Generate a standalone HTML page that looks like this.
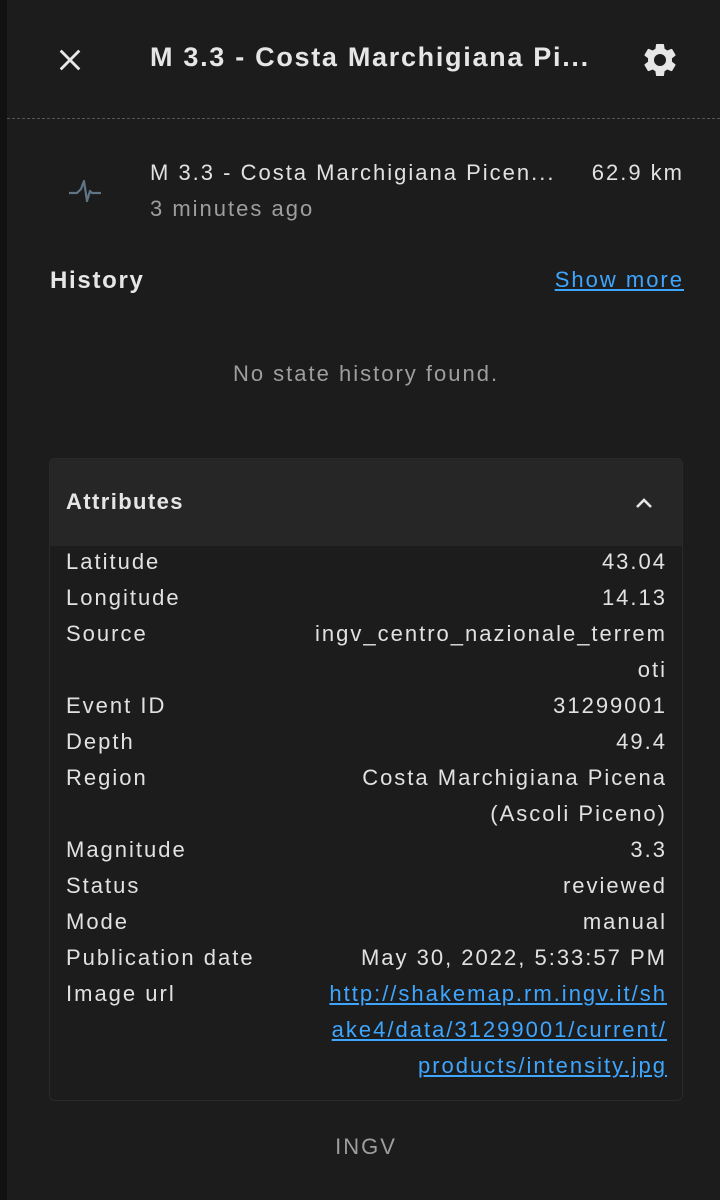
<!DOCTYPE html>
<html><head><meta charset="utf-8"><style>
*{margin:0;padding:0;box-sizing:border-box}
html,body{width:720px;height:1200px;overflow:hidden;background:#111;font-family:"Liberation Sans",sans-serif;color:#e1e1e1;letter-spacing:2px}
.panel{position:absolute;left:7px;top:0;width:713px;height:1200px;background:#1c1c1c}
.abs{position:absolute;white-space:nowrap}
.hdr-line{position:absolute;left:7px;right:0;top:118px;border-top:1px dashed #555}
.card{position:absolute;left:49px;top:458px;width:634px;height:643px;border:1px solid #2a2a2a;border-radius:6px;background:#1c1c1c;overflow:hidden}
.card .head{height:87px;background:#262626;position:relative}
.row{position:absolute;left:66px;width:601px;font-size:22px;letter-spacing:2px}
.row .k{position:absolute;left:0}
.row .v{position:absolute;right:0;text-align:right;line-height:36px}
a{color:#3ea6ff;text-decoration:underline}
</style></head><body>
<div class="panel"></div>
<svg class="abs" style="left:56px;top:46px" width="28" height="28" viewBox="0 0 24 24"><path d="M4 4L20 20M20 4L4 20" stroke="#e8e8e8" stroke-width="2.4"/></svg>
<div class="abs" style="left:150px;top:42px;font-size:27px;font-weight:bold;color:#e6e6e6;letter-spacing:1.7px">M 3.3 - Costa Marchigiana Pi...</div>
<svg class="abs" style="left:640px;top:40px" width="40" height="40" viewBox="0 0 24 24"><path fill="#e6e6e6" d="M19.14 12.94c.04-.3.06-.61.06-.94s-.02-.64-.07-.94l2.03-1.58a.49.49 0 0 0 .12-.61l-1.92-3.32a.49.49 0 0 0-.59-.22l-2.39.96c-.5-.38-1.03-.7-1.62-.94l-.36-2.54a.48.48 0 0 0-.48-.41h-3.84c-.24 0-.43.17-.47.41l-.36 2.54c-.59.24-1.13.57-1.62.94l-2.39-.96a.48.48 0 0 0-.59.22L2.74 8.87c-.12.21-.08.47.12.61l2.03 1.58c-.05.3-.09.63-.09.94s.02.64.07.94l-2.03 1.58a.49.49 0 0 0-.12.61l1.92 3.32c.12.22.37.29.59.22l2.39-.96c.5.38 1.03.7 1.62.94l.36 2.54c.05.24.24.41.48.41h3.84c.24 0 .44-.17.47-.41l.36-2.54c.59-.24 1.13-.56 1.62-.94l2.39.96c.22.08.47 0 .59-.22l1.92-3.32c.12-.22.07-.47-.12-.61l-2.01-1.58zM12 15.6A3.6 3.6 0 1 1 12 8.4a3.6 3.6 0 0 1 0 7.2z"/></svg>
<div class="hdr-line"></div>
<svg class="abs" style="left:68px;top:178px" width="34" height="26" viewBox="0 0 34 26"><path d="M1 15h8l4-4 3-8 3 20 3-10 2 2h9" fill="none" stroke="#5f7585" stroke-width="2.2" stroke-linejoin="round"/></svg>
<div class="abs" style="left:150px;top:160px;font-size:22px;color:#e1e1e1">M 3.3 - Costa Marchigiana Picen...</div>
<div class="abs" style="right:36px;top:160px;font-size:22px;color:#e1e1e1">62.9 km</div>
<div class="abs" style="left:150px;top:196px;font-size:22px;color:#9e9e9e">3 minutes ago</div>
<div class="abs" style="left:50px;top:267px;font-size:24px;font-weight:bold;color:#e6e6e6;letter-spacing:1.7px">History</div>
<div class="abs" style="right:36px;top:267px;font-size:22px"><a>Show more</a></div>
<div class="abs" style="left:0;width:732px;text-align:center;top:361px;font-size:22px;color:#9e9e9e">No state history found.</div>
<div class="card"><div class="head">
<div class="abs" style="left:16px;top:30px;font-size:22px;font-weight:bold;color:#e6e6e6;letter-spacing:1.4px">Attributes</div>
<svg class="abs" style="left:582px;top:32px" width="24" height="24" viewBox="0 0 24 24"><path d="M5 16l7-7 7 7" fill="none" stroke="#e6e6e6" stroke-width="2.6"/></svg>
</div></div>
<div class="row" style="top:544px"><span class="k" style="line-height:36px">Latitude</span><span class="v">43.04</span></div>
<div class="row" style="top:580px"><span class="k" style="line-height:36px">Longitude</span><span class="v">14.13</span></div>
<div class="row" style="top:616px"><span class="k" style="line-height:36px">Source</span><span class="v">ingv_centro_nazionale_terrem<br>oti</span></div>
<div class="row" style="top:688px"><span class="k" style="line-height:36px">Event ID</span><span class="v">31299001</span></div>
<div class="row" style="top:724px"><span class="k" style="line-height:36px">Depth</span><span class="v">49.4</span></div>
<div class="row" style="top:760px"><span class="k" style="line-height:36px">Region</span><span class="v">Costa Marchigiana Picena<br>(Ascoli Piceno)</span></div>
<div class="row" style="top:832px"><span class="k" style="line-height:36px">Magnitude</span><span class="v">3.3</span></div>
<div class="row" style="top:868px"><span class="k" style="line-height:36px">Status</span><span class="v">reviewed</span></div>
<div class="row" style="top:904px"><span class="k" style="line-height:36px">Mode</span><span class="v">manual</span></div>
<div class="row" style="top:940px"><span class="k" style="line-height:36px">Publication date</span><span class="v">May 30, 2022, 5:33:57 PM</span></div>
<div class="row" style="top:976px"><span class="k" style="line-height:36px">Image url</span><span class="v"><a>http://shakemap.rm.ingv.it/sh<br>ake4/data/31299001/current/<br>products/intensity.jpg</a></span></div>
<div class="abs" style="left:0;width:732px;text-align:center;top:1134px;font-size:22px;color:#9e9e9e">INGV</div>
</body></html>
